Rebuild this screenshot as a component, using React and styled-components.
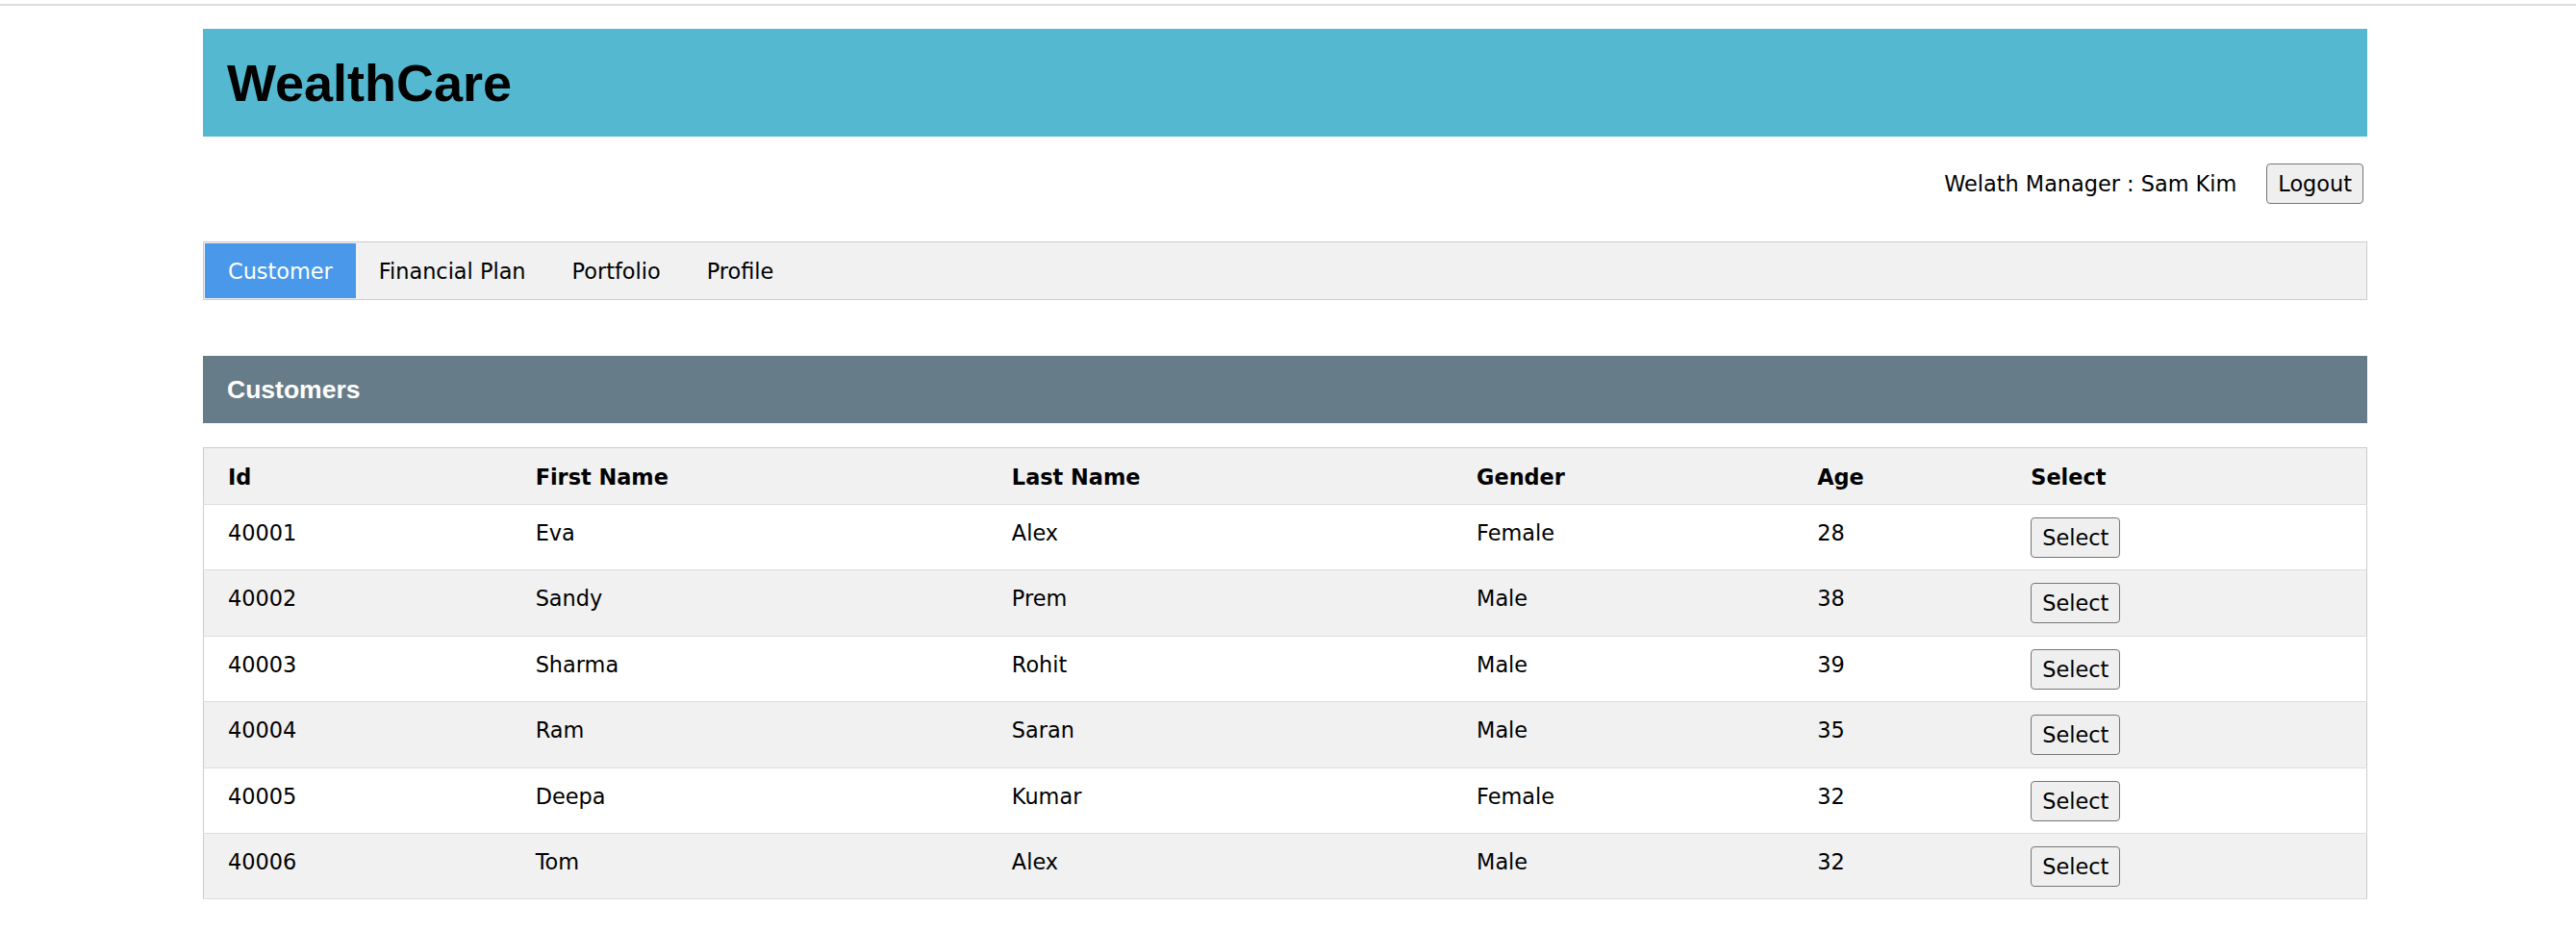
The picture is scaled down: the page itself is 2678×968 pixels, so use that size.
import React from "react";
import styled, { createGlobalStyle } from "styled-components";

const GlobalStyle = createGlobalStyle`
  body {
    margin: 0;
    background: #ffffff;
    color: #000000;
    font-family: "DejaVu Sans", Verdana, sans-serif;
    font-size: 22.4px;
  }
`;

const TopLine = styled.div`
  height: 2px;
  margin-top: 4px;
  background: #dddddd;
`;

const Container = styled.div`
  width: 2250px;
  margin: 24px 0 0 211px;
`;

const Header = styled.header`
  height: 112px;
  display: flex;
  align-items: center;
  padding: 0 25px;
  background: #53b8d0;
`;

const Title = styled.h1`
  margin: 0;
  font-family: "Liberation Sans", Arial, sans-serif;
  font-weight: 700;
  font-size: 54px;
  color: #000000;
`;

const UserBar = styled.div`
  display: flex;
  justify-content: flex-end;
  align-items: center;
  gap: 31px;
  margin-top: 28px;
  padding-right: 4px;
`;

const Button = styled.button`
  font-family: inherit;
  font-size: 22.4px;
  line-height: normal;
  padding: 7px 11px;
  border: 1px solid #767676;
  border-radius: 4px;
  background: #efefef;
  color: #000000;
  cursor: pointer;
  margin-top: ${(p) => p.$shift || 0}px;
`;

const Nav = styled.nav`
  display: flex;
  margin-top: 39px;
  padding: 1px;
  border: 1px solid #cccccc;
  background: #f1f1f1;
`;

const Tab = styled.a`
  display: flex;
  align-items: center;
  height: 57px;
  padding: 0 24px;
  color: ${(p) => (p.$active ? "#ffffff" : "#000000")};
  background: ${(p) => (p.$active ? "#4a98e9" : "transparent")};
  text-decoration: none;
  cursor: pointer;
`;

const Banner = styled.div`
  height: 70px;
  display: flex;
  align-items: center;
  padding: 0 25px;
  margin-top: 58px;
  background: #677c89;
`;

const BannerTitle = styled.h2`
  margin: 0;
  font-family: "Liberation Sans", Arial, sans-serif;
  font-weight: 700;
  font-size: 26.5px;
  color: #ffffff;
`;

const Table = styled.table`
  width: 100%;
  margin-top: 25px;
  border-collapse: collapse;
  table-layout: fixed;
  border: 1px solid #cccccc;
`;

const Row = styled.tr`
  background: ${(p) => (p.$shaded ? "#f1f1f1" : "#ffffff")};
  border-bottom: 1px solid #dddddd;
`;

const Th = styled.th`
  text-align: left;
  font-weight: 700;
  padding: 17px 25px 15px;
  vertical-align: top;
`;

const Td = styled.td`
  padding: 16px 25px 12.4px;
  vertical-align: top;
`;

const columns = [
  { label: "Id", width: 320 },
  { label: "First Name", width: 495 },
  { label: "Last Name", width: 483 },
  { label: "Gender", width: 354 },
  { label: "Age", width: 222 },
  { label: "Select", width: 374 },
];

const customers = [
  { id: 40001, first: "Eva", last: "Alex", gender: "Female", age: 28 },
  { id: 40002, first: "Sandy", last: "Prem", gender: "Male", age: 38 },
  { id: 40003, first: "Sharma", last: "Rohit", gender: "Male", age: 39 },
  { id: 40004, first: "Ram", last: "Saran", gender: "Male", age: 35 },
  { id: 40005, first: "Deepa", last: "Kumar", gender: "Female", age: 32 },
  { id: 40006, first: "Tom", last: "Alex", gender: "Male", age: 32 },
];

const tabs = ["Customer", "Financial Plan", "Portfolio", "Profile"];

const App = () => {
  return (
    <>
      <GlobalStyle />
      <TopLine />
      <Container>
        <Header>
          <Title>WealthCare</Title>
        </Header>
        <UserBar>
          <span>Welath Manager : Sam Kim</span>
          <Button>Logout</Button>
        </UserBar>
        <Nav>
          {tabs.map((t, i) => (
            <Tab key={t} $active={i === 0}>
              {t}
            </Tab>
          ))}
        </Nav>
        <Banner>
          <BannerTitle>Customers</BannerTitle>
        </Banner>
        <Table>
          <colgroup>
            {columns.map((c) => (
              <col key={c.label} style={{ width: c.width }} />
            ))}
          </colgroup>
          <thead>
            <Row $shaded>
              {columns.map((c) => (
                <Th key={c.label}>{c.label}</Th>
              ))}
            </Row>
          </thead>
          <tbody>
            {customers.map((c, i) => (
              <Row key={c.id} $shaded={i % 2 === 1}>
                <Td>{c.id}</Td>
                <Td>{c.first}</Td>
                <Td>{c.last}</Td>
                <Td>{c.gender}</Td>
                <Td>{c.age}</Td>
                <Td>
                  <Button $shift={-3}>Select</Button>
                </Td>
              </Row>
            ))}
          </tbody>
        </Table>
      </Container>
    </>
  );
};

export default App;
